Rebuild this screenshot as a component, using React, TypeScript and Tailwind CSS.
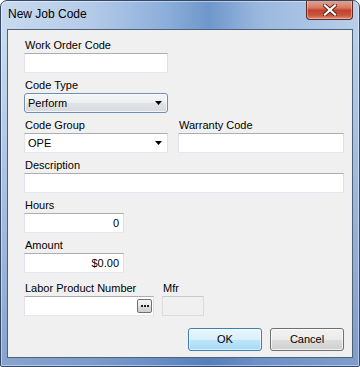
import React from "react";

const font = "font-['Liberation_Sans',Arial,sans-serif]";

function Label({ children, className = "" }: { children: React.ReactNode; className?: string }) {
  return <div className={`h-[14px] leading-[14px] text-[11px] text-black pl-[1px] ${className}`}>{children}</div>;
}

function TextBox({ className = "", value = "", right = false }: { className?: string; value?: string; right?: boolean }) {
  return (
    <div
      className={`h-[20px] bg-white border border-[#e3e9ef] border-t-[#abadb3] border-l-[#e2e3ea] border-r-[#dbdfe6] text-[11px] leading-[18px] text-black flex items-center ${right ? "justify-end pr-[4px]" : "pl-[3px]"} ${className}`}
    >
      {value}
    </div>
  );
}

function Arrow() {
  return (
    <svg width="7" height="4" viewBox="0 0 7 4" className="block">
      <path d="M0 0H7L3.5 4Z" fill="#000" />
    </svg>
  );
}

export default function App() {
  return (
    <div className={`w-[360px] h-[367px] bg-white ${font}`}>
      <div className="w-[360px] h-[367px] rounded-t-[7px] rounded-b-[2px] border border-[#34496a] shadow-[inset_0_0_0_1px_rgba(255,255,255,0.45)] bg-[linear-gradient(to_bottom,rgba(60,100,170,0)_0px,rgba(60,100,170,0)_40px,rgba(55,95,165,0.45)_100%),linear-gradient(to_right,#c8daef_0%,#b4cbe8_25%,#8eb0dc_45%,#6f97cb_58%,#9ab8de_72%,#b9cfea_100%)] flex flex-col relative overflow-hidden">
        {/* Title bar */}
        <div className="h-[28px] shrink-0 flex items-start relative">
          <div className="pl-[7px] pt-[6px] text-[12px] leading-[15px] text-black">New Job Code</div>
          <div className="absolute right-[6px] top-[-1px] w-[47px] h-[20px] rounded-b-[4px] border border-[#5c2a22] border-t-0 bg-[linear-gradient(to_bottom,#e4a897_0%,#d77a64_40%,#c1432d_55%,#c9553d_80%,#de8f78_100%)] shadow-[inset_0_0_0_1px_rgba(255,255,255,0.35)] flex items-center justify-center">
            <svg width="14" height="12" viewBox="0 0 14 12">
              <path d="M2 1.5L12 10.5M12 1.5L2 10.5" stroke="#5a2218" strokeWidth="4" strokeLinecap="square" />
              <path d="M2 1.5L12 10.5M12 1.5L2 10.5" stroke="#ffffff" strokeWidth="2.2" strokeLinecap="square" />
            </svg>
          </div>
        </div>
        {/* Client */}
        <div className="mx-[6px] h-[329px] border border-[#4f6079] bg-[#f0f0f0] pl-[16px] pr-[8px] flex flex-col">
          <Label className="mt-[8px]">Work Order Code</Label>
          <TextBox className="mt-[1px] w-[144px]" />

          <Label className="mt-[5px]">Code Type</Label>
          <div className="mt-[1px] w-[144px] h-[20px] rounded-[3px] border border-[#6f8fb3] bg-[linear-gradient(to_bottom,#f4f5f6_0%,#eceef0_50%,#dfe2e6_51%,#d7dbe0_100%)] shadow-[inset_0_0_0_1px_rgba(255,255,255,0.7)] flex items-center justify-between pl-[3px] pr-[5px] text-[11px] text-black">
            <span>Perform</span>
            <Arrow />
          </div>

          <div className="mt-[5px] flex gap-[10px]">
            <div className="w-[144px] flex flex-col">
              <Label>Code Group</Label>
              <div className="mt-[1px] h-[20px] bg-white border border-[#e3e9ef] border-t-[#abadb3] border-l-[#e2e3ea] border-r-[#dbdfe6] flex items-center justify-between pl-[3px] pr-[5px] text-[11px] text-black">
                <span>OPE</span>
                <Arrow />
              </div>
            </div>
            <div className="w-[166px] flex flex-col">
              <Label>Warranty Code</Label>
              <TextBox className="mt-[1px]" />
            </div>
          </div>

          <Label className="mt-[5px]">Description</Label>
          <TextBox className="mt-[1px] w-[320px]" />

          <Label className="mt-[5px]">Hours</Label>
          <TextBox className="mt-[1px] w-[100px]" value="0" right />

          <Label className="mt-[5px]">Amount</Label>
          <TextBox className="mt-[1px] w-[100px]" value="$0.00" right />

          <div className="mt-[8px] flex gap-[8px]">
            <div className="w-[130px] flex flex-col">
              <Label>Labor Product Number</Label>
              <div className="mt-[1px] h-[20px] bg-white border border-[#e3e9ef] border-t-[#abadb3] border-l-[#e2e3ea] border-r-[#dbdfe6] flex items-center justify-end pr-[1px]">
                <div className="w-[15px] h-[14px] rounded-[2px] border border-[#707070] bg-[linear-gradient(to_bottom,#f2f2f2_0%,#ebebeb_50%,#dddddd_51%,#cfcfcf_100%)] flex items-center justify-center gap-[1px]">
                  <span className="w-[2px] h-[2px] bg-[#222]" />
                  <span className="w-[2px] h-[2px] bg-[#222]" />
                  <span className="w-[2px] h-[2px] bg-[#222]" />
                </div>
              </div>
            </div>
            <div className="w-[42px] flex flex-col">
              <Label>Mfr</Label>
              <div className="mt-[1px] h-[20px] bg-[#f0f0f0] border border-[#dcdcdc] border-t-[#c9c9c9]" />
            </div>
          </div>

          <div className="mt-[12px] flex justify-end gap-[8px]">
            <div className="w-[74px] h-[23px] rounded-[3px] border border-[#3c7fb1] bg-[linear-gradient(to_bottom,#eaf6fd_0%,#d9f0fc_50%,#bee6fd_51%,#a7d9f5_100%)] shadow-[inset_0_0_0_1px_rgba(255,255,255,0.6)] flex items-center justify-center text-[11px] text-black">
              OK
            </div>
            <div className="w-[74px] h-[23px] rounded-[3px] border border-[#707070] bg-[linear-gradient(to_bottom,#f2f2f2_0%,#ebebeb_50%,#dddddd_51%,#cfcfcf_100%)] shadow-[inset_0_0_0_1px_rgba(255,255,255,0.7)] flex items-center justify-center text-[11px] text-black">
              Cancel
            </div>
          </div>
        </div>
      </div>
    </div>
  );
}
